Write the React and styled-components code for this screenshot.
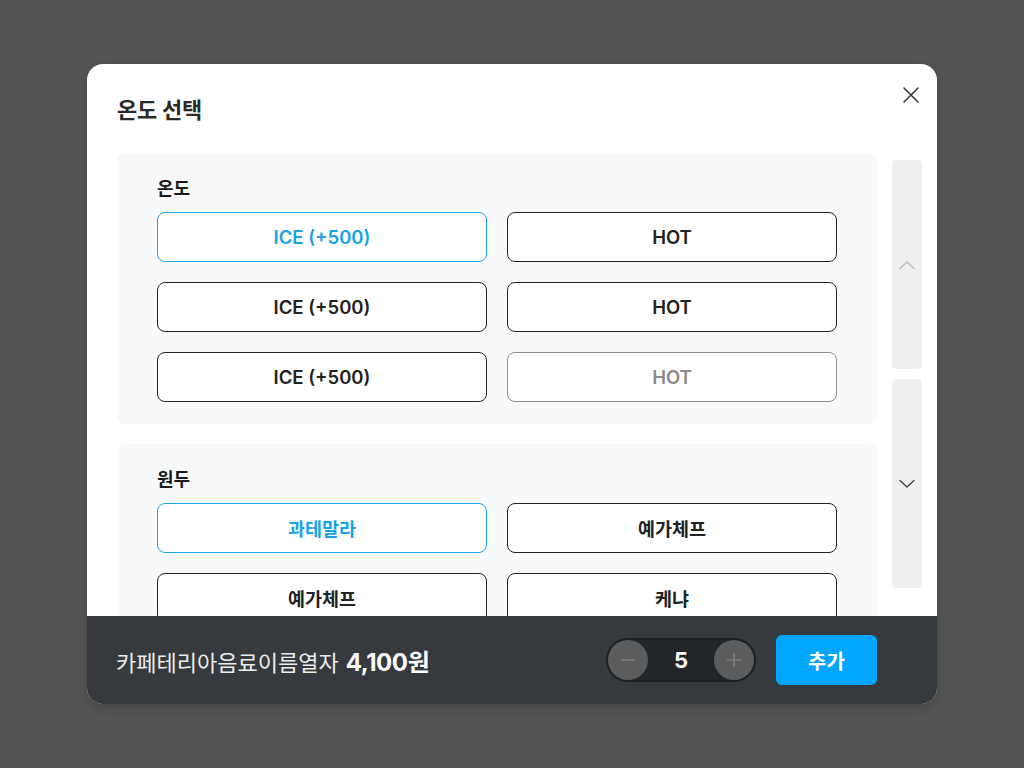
import React from "react";
import styled, { createGlobalStyle } from "styled-components";

const Global = createGlobalStyle`
  html, body { margin: 0; padding: 0; }
  body {
    background: #545454;
    font-family: Inter, "Noto Sans CJK KR", "Noto Sans", sans-serif;
    -webkit-font-smoothing: antialiased;
  }
  * { box-sizing: border-box; }
`;

const Page = styled.div`
  width: 1024px;
  height: 768px;
  padding: 64px 87px;
`;

const Modal = styled.div`
  width: 850px;
  height: 640px;
  background: #fff;
  border-radius: 16px;
  overflow: hidden;
  display: flex;
  flex-direction: column;
  position: relative;
  box-shadow: 0 4px 12px rgba(0, 0, 0, 0.18);
`;

const Header = styled.div`
  padding: 30px 30px 27px;
  display: flex;
  align-items: center;
`;

const Title = styled.h2`
  margin: 0;
  font-size: 22px;
  line-height: 32px;
  font-weight: 600;
  color: #2a2a2a;
  letter-spacing: -0.3px;
`;

const CloseBtn = styled.button`
  position: absolute;
  top: 18px;
  right: 13px;
  width: 26px;
  height: 26px;
  padding: 0;
  border: 0;
  background: none;
  display: flex;
  align-items: center;
  justify-content: center;
`;

const Body = styled.div`
  flex: 1;
  min-height: 0;
  display: flex;
  padding: 0 15px 0 30px;
  gap: 15px;
`;

const Scroller = styled.div`
  flex: 1;
  overflow: hidden;
  display: flex;
  flex-direction: column;
  gap: 20px;
`;

const Section = styled.section`
  background: #f8f9fa;
  border-radius: 8px;
  padding: 24px 40px 22px;
  flex-shrink: 0;
`;

const SectionLabel = styled.h3`
  margin: 0 0 12px;
  font-size: 18px;
  line-height: 23px;
  font-weight: 600;
  color: #1a1a1a;
`;

const Grid = styled.div`
  display: grid;
  grid-template-columns: 1fr 1fr;
  gap: 20px;
`;

const Option = styled.button`
  height: 50px;
  border-radius: 8px;
  background: #fff;
  font-family: inherit;
  font-size: 18.5px;
  font-weight: 600;
  border: 1px solid
    ${(p) => (p.$state === "selected" ? "#22a7e9" : p.$state === "disabled" ? "#8c8c8c" : "#222")};
  color: ${(p) => (p.$state === "selected" ? "#17a3e6" : p.$state === "disabled" ? "#8a8a8a" : "#222")};
`;

const ScrollCol = styled.div`
  width: 30px;
  display: flex;
  flex-direction: column;
  gap: 10px;
  padding: 7px 0 28px;
`;

const ScrollBtn = styled.button`
  flex: 1;
  border: 0;
  padding: 0;
  border-radius: 4px;
  background: #efefef;
  display: flex;
  align-items: center;
  justify-content: center;
`;

const Footer = styled.div`
  height: 88px;
  background: #363a3f;
  display: flex;
  align-items: center;
  padding: 0 60px 0 29px;
`;

const Summary = styled.div`
  flex: 1;
  color: #ececec;
  font-size: 22px;
  font-weight: 400;
  display: flex;
  align-items: baseline;
  gap: 7px;
`;

const Price = styled.span`
  font-size: 24px;
  font-weight: 700;
  color: #fff;
  letter-spacing: -0.4px;
`;

const Stepper = styled.div`
  width: 150px;
  height: 44px;
  border-radius: 22px;
  background: #232628;
  border: 2px solid #1c1e20;
  display: flex;
  align-items: center;
  justify-content: space-between;
  margin-right: 20px;
`;

const StepBtn = styled.button`
  width: 40px;
  height: 40px;
  border-radius: 50%;
  border: 0;
  padding: 0;
  background: #5a5c5e;
  display: flex;
  align-items: center;
  justify-content: center;
`;

const Count = styled.span`
  color: #fff;
  font-size: 22px;
  font-weight: 700;
`;

const AddBtn = styled.button`
  width: 101px;
  height: 50px;
  border: 0;
  border-radius: 6px;
  background: #03a6ff;
  color: #fff;
  font-family: inherit;
  font-size: 20px;
  font-weight: 600;
`;

const Chevron = ({ dir, color }) => (
  <svg width="18" height="10" viewBox="0 0 18 10" fill="none">
    <path
      d={dir === "up" ? "M2 8.5 L9 2 L16 8.5" : "M2 1.5 L9 8 L16 1.5"}
      stroke={color}
      strokeWidth="1.4"
      strokeLinecap="round"
      strokeLinejoin="round"
    />
  </svg>
);

const sections = [
  {
    label: "온도",
    options: [
      ["ICE (+500)", "selected"],
      ["HOT", "normal"],
      ["ICE (+500)", "normal"],
      ["HOT", "normal"],
      ["ICE (+500)", "normal"],
      ["HOT", "disabled"],
    ],
  },
  {
    label: "원두",
    options: [
      ["과테말라", "selected"],
      ["예가체프", "normal"],
      ["예가체프", "normal"],
      ["케냐", "normal"],
    ],
  },
];

export default function App() {
  return (
    <>
      <Global />
      <Page>
        <Modal>
          <Header>
            <Title>온도 선택</Title>
          </Header>
          <CloseBtn aria-label="닫기">
            <svg width="18" height="18" viewBox="0 0 18 18">
              <path d="M2 2 L16 16 M16 2 L2 16" stroke="#333" strokeWidth="1.5" strokeLinecap="round" />
            </svg>
          </CloseBtn>
          <Body>
            <Scroller>
              {sections.map((s) => (
                <Section key={s.label}>
                  <SectionLabel>{s.label}</SectionLabel>
                  <Grid>
                    {s.options.map(([t, st], i) => (
                      <Option key={i} $state={st}>
                        {t}
                      </Option>
                    ))}
                  </Grid>
                </Section>
              ))}
            </Scroller>
            <ScrollCol>
              <ScrollBtn aria-label="위로">
                <Chevron dir="up" color="#bdbdbd" />
              </ScrollBtn>
              <ScrollBtn aria-label="아래로">
                <Chevron dir="down" color="#444" />
              </ScrollBtn>
            </ScrollCol>
          </Body>
          <Footer>
            <Summary>
              카페테리아음료이름열자 <Price>4,100원</Price>
            </Summary>
            <Stepper>
              <StepBtn aria-label="감소">
                <svg width="16" height="16" viewBox="0 0 16 16">
                  <path d="M1 8 H15" stroke="#7a7c7e" strokeWidth="1.6" />
                </svg>
              </StepBtn>
              <Count>5</Count>
              <StepBtn aria-label="증가">
                <svg width="16" height="16" viewBox="0 0 16 16">
                  <path d="M1 8 H15 M8 1 V15" stroke="#7a7c7e" strokeWidth="1.6" />
                </svg>
              </StepBtn>
            </Stepper>
            <AddBtn>추가</AddBtn>
          </Footer>
        </Modal>
      </Page>
    </>
  );
}
